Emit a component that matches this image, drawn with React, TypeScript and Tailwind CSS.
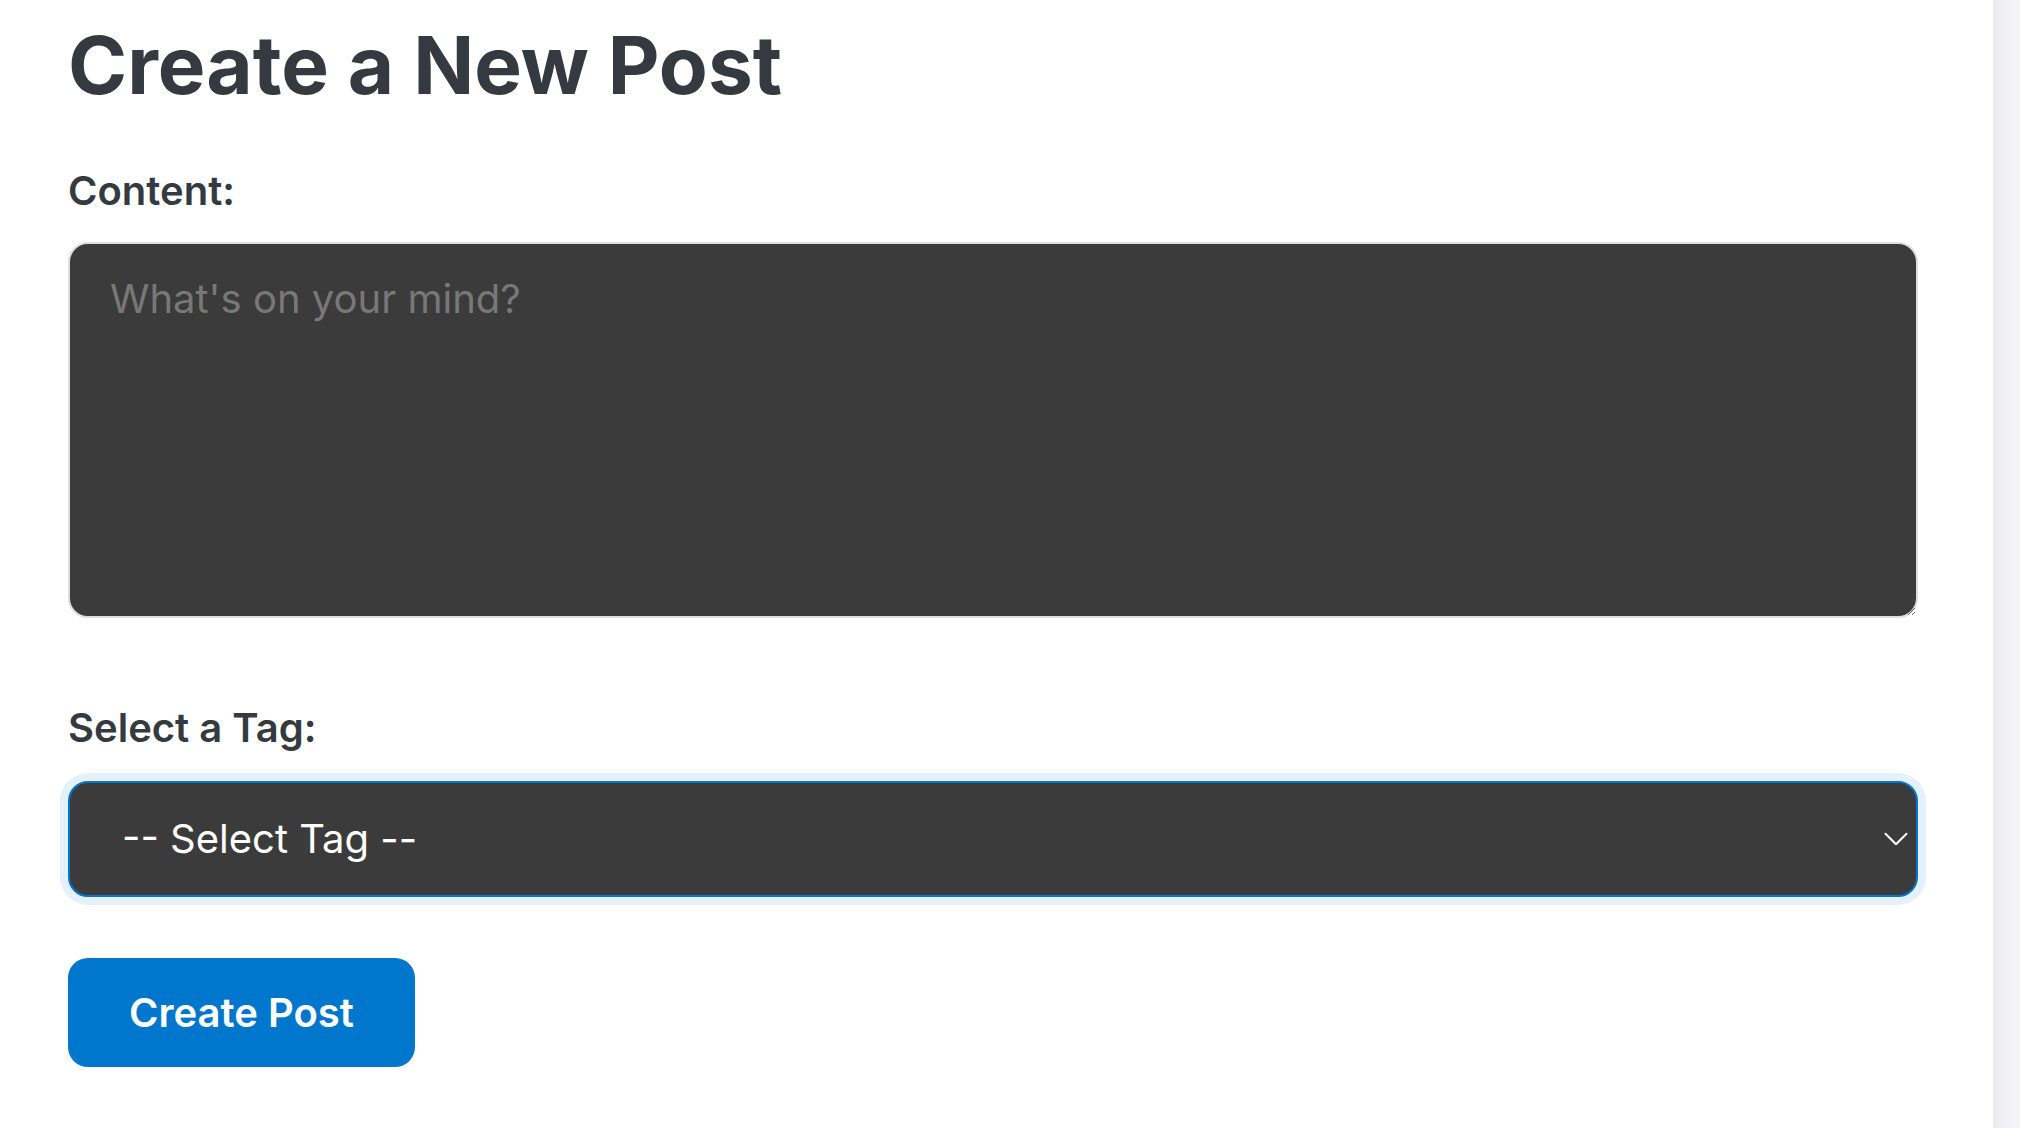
import { ChevronDown } from 'lucide-react'

/** New post form. */
export default function App() {
  return (
    <div className="flex h-[1128px] w-full bg-white font-['Inter',sans-serif] text-[#343a40]">
      <main className="flex-1 pl-[68px] pr-[75px] pt-[25px]">
        <h1 className="text-[80px] font-bold leading-none">Create a New Post</h1>

        <form className="flex flex-col" onSubmit={(e) => e.preventDefault()}>
          <label htmlFor="content" className="mt-[66px] text-[40px] font-semibold leading-none">
            Content:
          </label>
          <textarea
            id="content"
            placeholder="What's on your mind?"
            className="mt-[31px] block h-[376px] w-full rounded-[20px] border-2 border-[#dedede] bg-[#3b3b3b] px-[40px] pt-[25px] text-[40px] text-white outline-none placeholder:text-[#787878]"
          />

          <label htmlFor="tag" className="mt-[90px] text-[40px] font-semibold leading-none">
            Select a Tag:
          </label>
          <div className="relative mt-[33px]">
            <select
              id="tag"
              defaultValue=""
              className="block h-[116px] w-full appearance-none rounded-[20px] border-2 border-[#0077cc] bg-[#3b3b3b] pl-[52px] text-[40px] text-white outline-none ring-[8px] ring-[#0077cc]/10"
            >
              <option value="">-- Select Tag --</option>
              <option value="news">News</option>
              <option value="tech">Tech</option>
            </select>
            <ChevronDown
              className="pointer-events-none absolute right-[1px] top-1/2 h-[42px] w-[42px] -translate-y-1/2 text-white"
              strokeWidth={1.15}
            />
          </div>

          <button
            type="submit"
            className="mt-[61px] h-[109px] w-[347px] rounded-[20px] bg-[#0077cc] text-[40px] font-semibold text-white"
          >
            Create Post
          </button>
        </form>
      </main>
      <div className="w-[27px] bg-gradient-to-r from-[#ebebf0] to-[#f5f5f9]" />
    </div>
  )
}
